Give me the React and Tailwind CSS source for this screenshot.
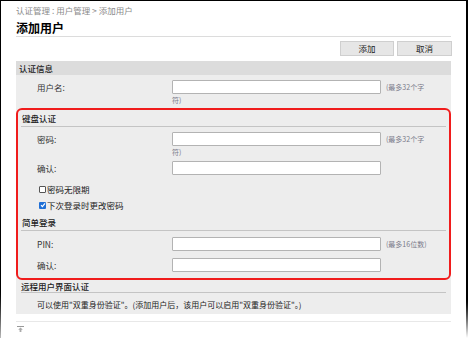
import React from "react";

const font = { fontFamily: '"Noto Sans CJK SC", "Noto Sans", sans-serif' };

// label column: inside the red box the row starts 2px further right (border)
const Field = ({ label, hint, wrap, inside, className = "" }) => (
  <div className={`flex flex-col ${className}`}>
    <div className="flex items-center h-[14px]">
      <div className={`${inside ? "w-[154px] pl-[19px]" : "w-[156px] pl-[21px]"} shrink-0 text-[8.5px] leading-none text-[#333]`}>{label}</div>
      <div className="w-[209px] h-[14px] bg-white border border-[#b3b3b3] rounded-[1px] shrink-0" />
      {hint && <div className="ml-[5px] text-[7px] leading-none text-[#7a7a8a] whitespace-nowrap">{hint}</div>}
    </div>
    {wrap && (
      <div className={`${inside ? "pl-[154px]" : "pl-[156px]"} mt-[2px] text-[7px] leading-[8px] text-[#7a7a8a]`}>{wrap}</div>
    )}
  </div>
);

const SubHead = ({ children, className = "" }) => (
  <div className={`mx-[3px] border-b border-[#c4c4c4] h-[16px] flex items-center pl-[1px] text-[8.5px] leading-none font-medium text-[#222] ${className}`}>
    {children}
  </div>
);

const Check = ({ checked, label, className = "" }) => (
  <div className={`flex items-center pl-[21px] h-[10px] ${className}`}>
    {checked ? (
      <div className="w-[7px] h-[7px] bg-[#1f6fd6] rounded-[1px] flex items-center justify-center">
        <svg width="6" height="6" viewBox="0 0 6 6">
          <path d="M1 3.2 L2.4 4.6 L5 1.4" stroke="white" strokeWidth="1.2" fill="none" />
        </svg>
      </div>
    ) : (
      <div className="w-[7px] h-[7px] bg-white border border-[#555] rounded-[1px]" />
    )}
    <span className="ml-[1px] text-[8.5px] leading-none text-[#222]">{label}</span>
  </div>
);

export default function App() {
  return (
    <div style={font} className="w-[468px] h-[338px] overflow-hidden bg-white flex">
      <div className="w-px h-full bg-linear-to-b from-black via-black via-85% to-[#bbb] shrink-0" />
      <div className="flex-1 flex flex-col border-t border-black pl-[15px] pr-[15px]">
        <div className="mt-[3px] text-[8.5px] leading-[12px] text-[#8a8a8a]">认证管理 : 用户管理 &gt; 添加用户</div>
        <div className="mt-[5px] text-[12px] leading-[14px] font-bold text-black">添加用户</div>
        <div className="mt-[1px] border-b border-[#dcdcdc]" />
        <div className="mt-[4px] flex justify-end gap-[3px] -mr-px">
          <button className="w-[54px] h-[15px] bg-[#e6e6e6] border border-[#cfcfcf] text-[8.5px] leading-none text-[#222]">添加</button>
          <button className="w-[55px] h-[15px] bg-[#e6e6e6] border border-[#cfcfcf] text-[8.5px] leading-none text-[#222]">取消</button>
        </div>

        <div className="mt-[5px] bg-[#ededed] flex flex-col pb-[5px]">
          <div className="h-[14px] bg-[#dcdcdc] flex items-center pl-[3px] text-[8.5px] leading-none font-medium text-[#222]">认证信息</div>
          <Field className="mt-[5px]" label="用户名:" hint="(最多32个字" wrap="符)" />

          <div className="mt-[4px] border-2 border-[#f01c1c] rounded-[6px] pb-[6px] flex flex-col">
            <SubHead className="mt-[1px]">键盘认证</SubHead>
            <Field inside className="mt-[5px]" label="密码:" hint="(最多32个字" wrap="符)" />
            <Field inside className="mt-[5px]" label="确认:" />
            <Check className="mt-[9px]" label="密码无限期" />
            <Check className="mt-[6px]" checked label="下次登录时更改密码" />
            <SubHead className="mt-[5px]">简单登录</SubHead>
            <Field inside className="mt-[6px]" label="PIN:" hint="(最多16位数)" />
            <Field inside className="mt-[7px]" label="确认:" />
          </div>

          <div className="mx-[5px] border-b border-[#c4c4c4] h-[13px] flex items-center text-[8.5px] leading-none font-medium text-[#222]">远程用户界面认证</div>
          <div className="mt-[8px] pl-[21px] text-[8px] leading-none text-[#222] whitespace-nowrap">
            可以使用"双重身份验证"。(添加用户后，该用户可以启用"双重身份验证"。)
          </div>
        </div>

        <div className="mt-[7px] border-b border-[#e8e8e8]" />
        <div className="mt-[4px] pl-[1px]">
          <svg width="7" height="6" viewBox="0 0 7 6">
            <rect x="0" y="0" width="7" height="1" fill="#999" />
            <path d="M3.5 1.5 L1.2 3.8 H2.6 V6 H4.4 V3.8 H5.8 Z" fill="#aaa" />
          </svg>
        </div>
      </div>
      <div className="w-[2px] h-full bg-linear-to-b from-black via-black via-88% to-white shrink-0" />
    </div>
  );
}
